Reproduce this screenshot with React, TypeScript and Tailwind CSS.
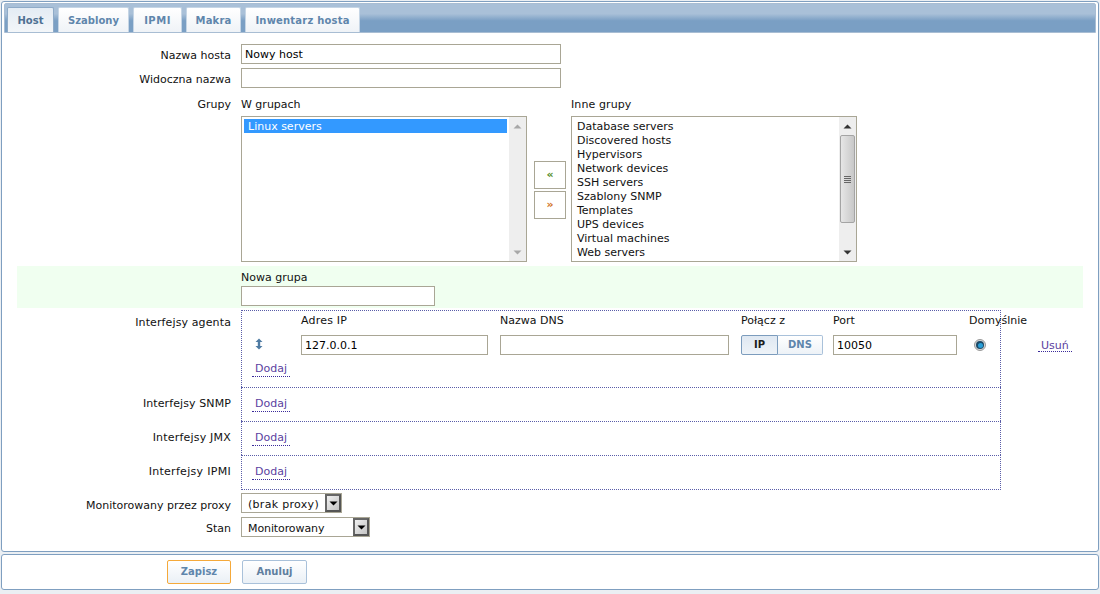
import React from "react";

const field = "h-5 border border-[#a9a695] bg-white px-[3px] text-[11px] text-black outline-none font-['DejaVu_Sans',sans-serif]";
const otherGroups = ["Database servers", "Discovered hosts", "Hypervisors", "Network devices", "SSH servers", "Szablony SNMP", "Templates", "UPS devices", "Virtual machines", "Web servers"];
const tabs = [
  { name: "Host", w: "w-[47px]", extra: "", active: true },
  { name: "Szablony", w: "w-[71px]", extra: "" },
  { name: "IPMI", w: "w-[49px]", extra: "tracking-[0.5px]" },
  { name: "Makra", w: "w-[55px]", extra: "tracking-[0.2px]" },
  { name: "Inwentarz hosta", w: "w-[115px]", extra: "tracking-[0.2px]" },
];

function Row({ label, children, className = "", labelClass = "" }: { label: string; children?: React.ReactNode; className?: string; labelClass?: string }) {
  return (
    <div className={`flex gap-[10px] ${className}`}>
      <div className={`w-[228px] shrink-0 text-right ${labelClass}`}>{label}</div>
      {children}
    </div>
  );
}

function Arrow({ up, color }: { up?: boolean; color: string }) {
  return (
    <svg width="9" height="5" viewBox="0 0 9 5" className="block">
      <path d={up ? "M4.5 0.5 L8.5 4.5 H0.5 Z" : "M0.5 0.5 H8.5 L4.5 4.5 Z"} fill={color} />
    </svg>
  );
}

function Scrollbar({ thumb }: { thumb?: boolean }) {
  const color = thumb ? "#333333" : "#a8a8a8";
  return (
    <div className="flex h-full w-[17px] shrink-0 flex-col items-center bg-[#eeeeee]">
      <div className="flex h-[18px] items-center justify-center"><Arrow up color={color} /></div>
      <div className="flex min-h-0 flex-1 flex-col">
        {thumb && (
          <div className="flex h-[88px] w-[15px] flex-col items-center justify-center gap-[1px] rounded-[2px] border border-[#a4a4a4] bg-gradient-to-r from-[#e6e6e6] to-[#c8c8c8]">
            <div className="h-px w-[7px] bg-[#666]" />
            <div className="h-px w-[7px] bg-[#666]" />
            <div className="h-px w-[7px] bg-[#666]" />
            <div className="h-px w-[7px] bg-[#666]" />
          </div>
        )}
      </div>
      <div className="flex h-[18px] items-center justify-center"><Arrow color={color} /></div>
    </div>
  );
}

function ListBox({ children, thumb }: { children: React.ReactNode; thumb?: boolean }) {
  return (
    <div className="flex h-[146px] w-[286px] border border-[#a9a695] bg-white">
      <div className="min-w-0 flex-1 pl-px pt-[2px]">{children}</div>
      <Scrollbar thumb={thumb} />
    </div>
  );
}

function Dodaj({ className = "" }: { className?: string }) {
  return <a className={`inline-block border-b border-dotted border-[#3a2a9a] px-[3px] leading-[15px] text-[#5b3fa0] ${className}`}>Dodaj</a>;
}

function SelectBox({ value, w, textClass = "" }: { value: string; w: string; textClass?: string }) {
  return (
    <div className={`flex h-5 ${w} items-stretch border border-[#a9a695] bg-white`}>
      <div className={`flex-1 pl-[6px] ${textClass}`}>{value}</div>
      <div className="flex w-[16px] items-center justify-center border-2 border-t-[#666] border-l-[#666] border-r-[#555] border-b-[#555] bg-gradient-to-br from-[#f0f0f0] to-[#c4c4c4]">
        <Arrow color="#000" />
      </div>
    </div>
  );
}

export default function App() {
  return (
    <div className="h-[594px] w-[1100px] overflow-hidden bg-[#ebeff3] p-px font-['DejaVu_Sans',sans-serif] text-[11px] leading-[14px] text-[#111]">
      <div className="h-[551px] w-[1098px] rounded-[3px] border border-[#7f9fc0] bg-white p-[1px]">
        <div className="ml-[1px] flex h-[30px] w-[1092px] items-end gap-[4px] rounded-t-[2px] border border-[#a8bdd3] bg-gradient-to-b from-[#a9c0d8] from-35% to-[#7a9fc4] to-60% pl-[2px]">
          {tabs.map((t) => (
            <div
              key={t.name}
              className={`flex h-[25px] ${t.w} ${t.extra} items-center justify-center rounded-t-[2px] border border-b-0 pt-[1px] text-[10px] font-bold ${
                t.active
                  ? "border-[#8fabc8] bg-gradient-to-b from-[#e4ecf4] to-[#f3f6f9] text-[#4f7193]"
                  : "border-[#c5d5e5] bg-gradient-to-b from-white to-[#eff3f7] text-[#5f86ac]"
              }`}
            >
              {t.name}
            </div>
          ))}
        </div>

        <Row label="Nazwa hosta" className="mt-[11px]" labelClass="pt-[5px]">
          <input readOnly value="Nowy host" className={`${field} w-[320px]`} />
        </Row>
        <Row label="Widoczna nazwa" className="mt-[4px]" labelClass="pt-[5px]">
          <input readOnly value="" className={`${field} w-[320px]`} />
        </Row>

        <Row label="Grupy" className="mt-[10px]">
          <div className="flex">
            <div>
              <div className="mb-[4px] h-[14px]">W grupach</div>
              <ListBox>
                <div className="ml-px mr-[2px] h-[14px] bg-[#3399ff] pl-[4px] leading-[16px] text-white">Linux servers</div>
              </ListBox>
            </div>
            <div className="flex w-[44px] flex-col gap-[2px] pl-[7px] pt-[63px]">
              <div className="flex h-[28px] w-[32px] items-center justify-center border border-[#a9a695] font-bold text-[#4f8a1c]">«</div>
              <div className="flex h-[28px] w-[32px] items-center justify-center border border-[#a9a695] font-bold text-[#d2701a]">»</div>
            </div>
            <div>
              <div className="mb-[4px] h-[14px] tracking-[0.1px]">Inne grupy</div>
              <ListBox thumb>
                {otherGroups.map((g) => (
                  <div key={g} className="h-[14px] pl-[4px] leading-[16px]">{g}</div>
                ))}
              </ListBox>
            </div>
          </div>
        </Row>

        <div className="ml-[14px] mt-[4px] flex h-[42px] w-[1066px] flex-col bg-[#f0fff0] pl-[224px] pt-[4px]">
          <div className="h-[16px] leading-[15px]">Nowa grupa</div>
          <input readOnly value="" className={`${field} w-[194px]`} />
        </div>

        <div className="mt-[2px]">
          <Row label="Interfejsy agenta" labelClass="pt-[6px] tracking-[0.12px]">
            <div className="h-[77px] w-[760px] border border-b-0 border-dotted border-[#5a5da8] pl-[10px]">
              <div className="grid grid-cols-[49px_199px_241px_92px_136px_72px_auto] pt-[3px]">
                <div />
                <div className="tracking-[0.2px]">Adres IP</div>
                <div>Nazwa DNS</div>
                <div>Połącz z</div>
                <div>Port</div>
                <div className="whitespace-nowrap">Domyślnie</div>
                <div />
                <div className="mt-[7px] pl-[3px] pt-[3px]">
                  <svg width="8" height="12" viewBox="0 0 8 12" className="block">
                    <path d="M4 0.5 L7.5 4 H5.2 V8 H7.5 L4 11.5 L0.5 8 H2.8 V4 H0.5 Z" fill="#4f7ba3" />
                  </svg>
                </div>
                <div className="mt-[7px]"><input readOnly value="127.0.0.1" className={`${field} w-[187px]`} /></div>
                <div className="mt-[7px]"><input readOnly value="" className={`${field} w-[229px]`} /></div>
                <div className="mt-[7px] flex h-5 w-[82px] text-[10px] font-bold">
                  <div className="flex w-[37px] items-center justify-center rounded-l-[2px] border border-[#7c9cbd] bg-gradient-to-b from-[#dfe8f2] to-[#eef3f8] text-[#1c1c1c]">IP</div>
                  <div className="flex flex-1 items-center justify-center rounded-r-[2px] border border-l-0 border-[#a9c1da] bg-gradient-to-b from-white to-[#edf2f7] text-[#5f86ac]">DNS</div>
                </div>
                <div className="mt-[7px]"><input readOnly value="10050" className={`${field} w-[124px]`} /></div>
                <div className="mt-[7px] flex h-5 items-center pl-[5px]">
                  <div className="flex h-[12px] w-[12px] items-center justify-center rounded-full border border-[#9a9a9a] bg-[#d8d8d8]">
                    <div className="flex h-[8px] w-[8px] items-center justify-center rounded-full bg-[#1c4a68]">
                      <div className="h-[5px] w-[5px] rounded-full bg-[#2a9fd8]" />
                    </div>
                  </div>
                </div>
                <div className="mt-[7px] flex h-5 items-center">
                  <a className="-ml-[3px] mb-[1px] inline-block border-b border-dotted border-[#3a2a9a] px-[3px] pt-[2px] leading-[11px] text-[#5b3fa0]">Usuń</a>
                </div>
              </div>
              <div className="mt-[6px]"><Dodaj /></div>
            </div>
          </Row>
          <Row label="Interfejsy SNMP" className="items-center" labelClass="tracking-[0.1px]">
            <div className="flex h-[34px] w-[760px] items-center border border-b-0 border-dotted border-[#5a5da8] pl-[10px]"><Dodaj className="mb-[2px]" /></div>
          </Row>
          <Row label="Interfejsy JMX" className="items-center" labelClass="tracking-[0.2px]">
            <div className="flex h-[34px] w-[760px] items-center border border-b-0 border-dotted border-[#5a5da8] pl-[10px]"><Dodaj className="mb-[2px]" /></div>
          </Row>
          <Row label="Interfejsy IPMI" className="items-center" labelClass="mb-[2px] tracking-[0.3px]">
            <div className="flex h-[35px] w-[760px] items-center border border-dotted border-[#5a5da8] pl-[10px]"><Dodaj className="mb-[2px]" /></div>
          </Row>
        </div>

        <Row label="Monitorowany przez proxy" className="mt-[3px]" labelClass="pt-[6px]">
          <SelectBox value="(brak proxy)" w="w-[101px]" textClass="pt-[4px] tracking-[0.3px]" />
        </Row>
        <Row label="Stan" className="mt-[4px]" labelClass="pt-[5px]">
          <SelectBox value="Monitorowany" w="w-[129px]" textClass="pt-[4px] tracking-[-0.1px]" />
        </Row>
      </div>

      <div className="mt-[2px] flex h-[36px] w-[1098px] items-center gap-[11px] rounded-[3px] border border-[#7f9fc0] bg-white pl-[165px]">
        <button className="h-[24px] w-[64px] rounded-[2px] border border-[#f5a93a] bg-gradient-to-b from-white to-[#eaf0f6] text-[10px] font-bold text-[#5f86ac]">Zapisz</button>
        <button className="h-[24px] w-[65px] rounded-[2px] border border-[#a9c1da] bg-gradient-to-b from-white to-[#eaf0f6] text-[10px] font-bold text-[#5f7f9f]">Anuluj</button>
      </div>
    </div>
  );
}
